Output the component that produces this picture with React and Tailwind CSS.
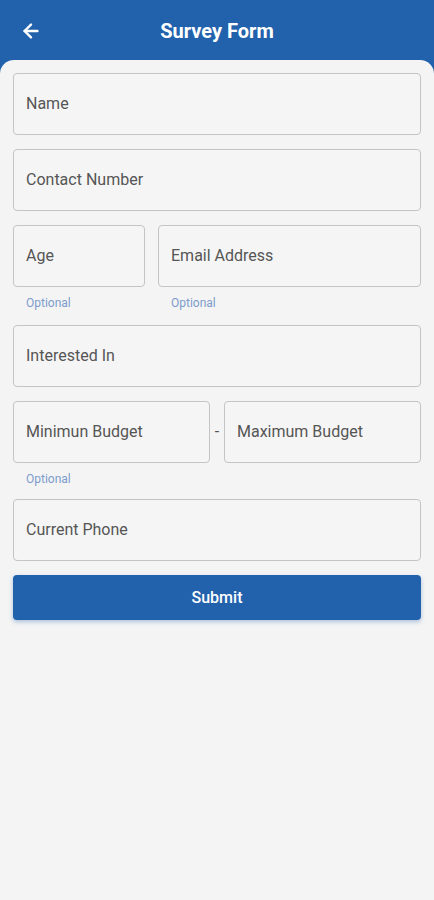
import { ArrowLeft } from "lucide-react";

function Field({ label, className = "" }) {
  return (
    <div
      className={`h-[62px] flex items-center px-3 border border-[#c4c4c4] rounded-[4px] bg-[#f5f5f5] text-[16px] text-[#555555] ${className}`}
    >
      {label}
    </div>
  );
}

function Hint() {
  return <div className="mt-[8px] pl-[13px] text-[12px] leading-[16px] text-[#7d9ccb]">Optional</div>;
}

export default function App() {
  return (
    <div className="min-h-[900px] flex flex-col bg-[#2262ad] font-['Roboto','Liberation_Sans',sans-serif]">
      {/* top bar */}
      <div className="h-[62px] shrink-0 flex items-center relative px-5">
        <ArrowLeft className="w-[22px] h-[22px] text-white" strokeWidth={2.6} />
        <div className="absolute inset-x-0 top-0 h-[62px] flex items-center justify-center text-white text-[20px] font-bold pointer-events-none">
          Survey Form
        </div>
      </div>

      {/* form panel */}
      <div className="flex-1 -mt-[2px] bg-[#f4f4f4] rounded-t-[14px] px-[13px] pt-[13px]">
        <Field label="Name" />
        <Field label="Contact Number" className="mt-[14px]" />

        <div className="mt-[14px] flex gap-[13px]">
          <div className="w-[132px]">
            <Field label="Age" />
            <Hint />
          </div>
          <div className="flex-1">
            <Field label="Email Address" />
            <Hint />
          </div>
        </div>

        <Field label="Interested In" className="mt-[14px]" />

        <div className="mt-[14px]">
          <div className="flex items-center">
            <Field label="Minimun Budget" className="flex-1" />
            <span className="w-[14px] text-center text-[16px] text-[#555555]">-</span>
            <Field label="Maximum Budget" className="flex-1" />
          </div>
          <Hint />
        </div>

        <Field label="Current Phone" className="mt-[12px]" />

        <button className="mt-[14px] w-full h-[45px] rounded-[4px] bg-[#2262ad] text-white text-[16px] font-medium shadow-[0_2px_4px_rgba(34,98,173,0.35)]">
          Submit
        </button>
      </div>
    </div>
  );
}
